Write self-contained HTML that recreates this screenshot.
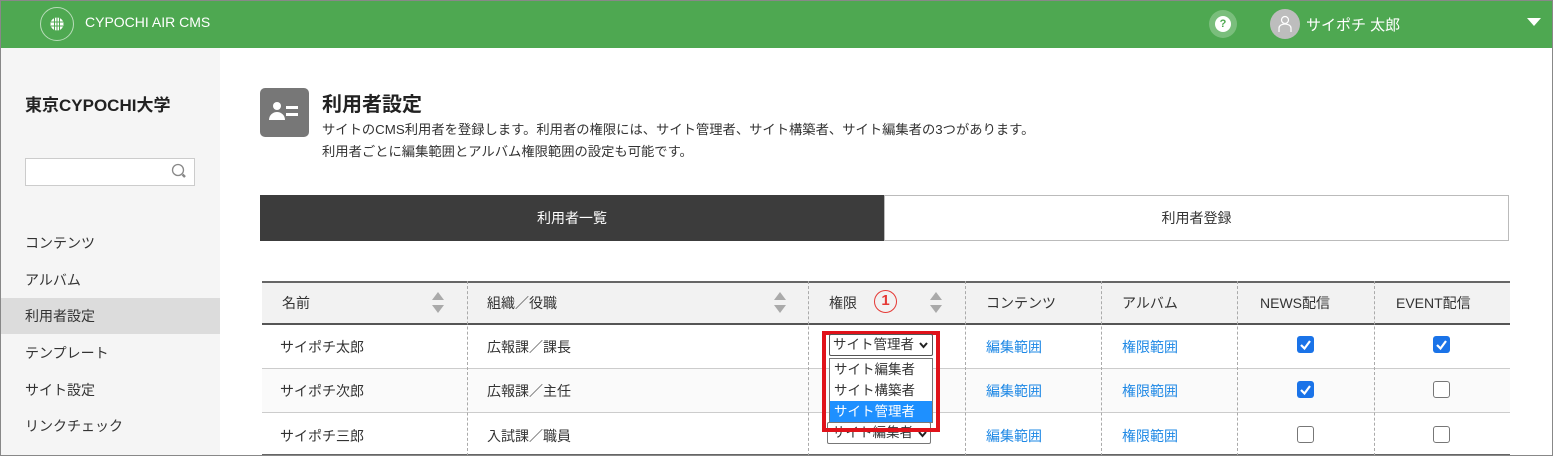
<!DOCTYPE html>
<html><head><meta charset="utf-8"><style>
*{margin:0;padding:0;box-sizing:border-box}
body{width:1553px;height:456px;overflow:hidden;font-family:"Liberation Sans","Noto Sans CJK JP",sans-serif;color:#333;background:#fff;position:relative;font-size:14px}
.a{position:absolute}
#frame{left:0;top:0;width:1553px;height:456px;border:1px solid #888;z-index:50;pointer-events:none}
#hdr{left:0;top:0;width:1553px;height:48px;background:#4ea851}
#side{left:0;top:48px;width:220px;height:408px;background:#f5f5f5}
.nav{left:0;width:220px;height:36px;line-height:36px;padding-left:25px;font-size:14px;color:#333}
.th,.td{position:absolute;font-size:14px}
.vl{position:absolute;top:281px;height:175px;border-left:1px dashed #aaa}
.hl{position:absolute;left:262px;width:1248px;border-top:1px solid #ccc}
.lnk{color:#1e88e5}
.cb{position:absolute;width:17px;height:17px;border-radius:3px}
.on{background:#1a73e8}
.off{border:1.5px solid #777;background:#fff}
.sort{position:absolute;width:0;height:0;border-left:6px solid transparent;border-right:6px solid transparent}
</style></head><body>
<div class="a" id="hdr"></div>
<div class="a" style="left:40px;top:7px;width:34px;height:34px;border-radius:50%;border:1px solid rgba(255,255,255,.6)"></div>
<svg class="a" style="left:50px;top:17px" width="14" height="14" viewBox="0 0 14 14"><circle cx="7" cy="7" r="6.5" fill="#fff"/><g stroke="#4ea851" stroke-width="1"><line x1="4.5" y1="1" x2="4.5" y2="13"/><line x1="7" y1="0" x2="7" y2="14"/><line x1="9.5" y1="1" x2="9.5" y2="13"/><line x1="1" y1="5" x2="13" y2="5"/><line x1="1" y1="9" x2="13" y2="9"/></g></svg>
<div class="a" style="left:85px;top:14px;color:#fff;font-size:14px">CYPOCHI AIR CMS</div>
<div class="a" style="left:1209px;top:10px;width:28px;height:28px;border-radius:50%;background:rgba(255,255,255,.25)"></div>
<div class="a" style="left:1215px;top:16px;width:16px;height:16px;border-radius:50%;background:#fff;color:#4ea851;font-size:11px;font-weight:bold;text-align:center;line-height:16px">?</div>
<div class="a" style="left:1270px;top:9px;width:30px;height:30px;border-radius:50%;background:#bdbdbd"></div>
<svg class="a" style="left:1277px;top:15px" width="16" height="18" viewBox="0 0 16 18" fill="none" stroke="#fff" stroke-width="1.2"><circle cx="8" cy="5" r="3.5"/><path d="M2 17v-4a6 4 0 0 1 12 0v4"/></svg>
<div class="a" style="left:1306px;top:14px;color:#fff;font-size:15px">サイポチ 太郎</div>
<div class="a" style="left:1527px;top:18px;border-left:7px solid transparent;border-right:7px solid transparent;border-top:8px solid #fff"></div>

<div class="a" id="side"></div>
<div class="a" style="left:25px;top:91px;font-size:17px;font-weight:bold;color:#222">東京CYPOCHI大学</div>
<div class="a" style="left:25px;top:158px;width:170px;height:28px;background:#fff;border:1px solid #ccc"></div>
<svg class="a" style="left:171px;top:163px" width="18" height="18" viewBox="0 0 18 18" fill="none" stroke="#888" stroke-width="1.3"><circle cx="7" cy="7" r="5.5"/><line x1="11.5" y1="11.5" x2="14" y2="14" stroke-width="2.5"/></svg>
<div class="a nav" style="top:225px">コンテンツ</div>
<div class="a nav" style="top:262px">アルバム</div>
<div class="a nav" style="top:298px;background:#dcdcdc">利用者設定</div>
<div class="a nav" style="top:335px">テンプレート</div>
<div class="a nav" style="top:372px">サイト設定</div>
<div class="a nav" style="top:408px">リンクチェック</div>

<div class="a" style="left:260px;top:88px;width:49px;height:49px;border-radius:5px;background:#777"></div>
<svg class="a" style="left:267px;top:100px" width="36" height="24" viewBox="0 0 36 24" fill="#fff"><circle cx="10" cy="6" r="4"/><path d="M2 20c0-5 4-8 8-8s8 3 8 8z"/><rect x="19" y="6" width="12" height="3"/><rect x="19" y="13" width="12" height="3"/></svg>
<div class="a" style="left:322px;top:88px;font-size:20px;font-weight:bold;color:#222">利用者設定</div>
<div class="a" style="left:322px;top:119px;font-size:13.3px;line-height:22px;color:#333">サイトのCMS利用者を登録します。利用者の権限には、サイト管理者、サイト構築者、サイト編集者の3つがあります。<br>利用者ごとに編集範囲とアルバム権限範囲の設定も可能です。</div>

<div class="a" style="left:260px;top:195px;width:624px;height:46px;background:#3c3c3c;color:#fff;text-align:center;line-height:46px;font-size:14px">利用者一覧</div>
<div class="a" style="left:884px;top:195px;width:625px;height:46px;border:1px solid #bbb;text-align:center;line-height:44px;font-size:14px">利用者登録</div>

<div class="a" style="left:262px;top:281px;width:1248px;height:44px;background:#f2f2f2;border-top:2px solid #666;border-bottom:2px solid #555"></div>
<div class="a" style="left:262px;top:369px;width:1248px;height:43px;background:#fafafa"></div>
<div class="hl" style="top:368px"></div>
<div class="hl" style="top:412px"></div>
<div class="a" style="left:262px;top:454px;width:1248px;border-top:2px solid #666"></div>
<div class="vl" style="left:467px"></div><div class="vl" style="left:808px"></div><div class="vl" style="left:965px"></div><div class="vl" style="left:1101px"></div><div class="vl" style="left:1237px"></div><div class="vl" style="left:1374px"></div>

<div class="th" style="left:282px;top:293px">名前</div>
<div class="sort" style="left:432px;top:292px;border-bottom:8px solid #aaa"></div><div class="sort" style="left:432px;top:305px;border-top:8px solid #aaa"></div>
<div class="th" style="left:487px;top:293px">組織／役職</div>
<div class="sort" style="left:774px;top:292px;border-bottom:8px solid #aaa"></div><div class="sort" style="left:774px;top:305px;border-top:8px solid #aaa"></div>
<div class="th" style="left:829px;top:293px">権限</div>
<div class="a" style="left:874px;top:290px;width:23px;height:23px;border:1.5px solid #e53935;border-radius:50%;color:#e53935;font-size:15px;font-weight:bold;text-align:center;line-height:20px">1</div>
<div class="sort" style="left:930px;top:292px;border-bottom:8px solid #aaa"></div><div class="sort" style="left:930px;top:305px;border-top:8px solid #aaa"></div>
<div class="th" style="left:986px;top:293px">コンテンツ</div>
<div class="th" style="left:1122px;top:293px">アルバム</div>
<div class="th" style="left:1260px;top:293px">NEWS配信</div>
<div class="th" style="left:1396px;top:293px">EVENT配信</div>

<div class="td" style="left:280px;top:337px">サイポチ太郎</div>
<div class="td" style="left:487px;top:337px">広報課／課長</div>
<div class="td" style="left:280px;top:381px">サイポチ次郎</div>
<div class="td" style="left:487px;top:381px">広報課／主任</div>
<div class="td" style="left:280px;top:426px">サイポチ三郎</div>
<div class="td" style="left:487px;top:426px">入試課／職員</div>
<div class="td lnk" style="left:986px;top:337px">編集範囲</div><div class="td lnk" style="left:1122px;top:337px">権限範囲</div>
<div class="td lnk" style="left:986px;top:381px">編集範囲</div><div class="td lnk" style="left:1122px;top:381px">権限範囲</div>
<div class="td lnk" style="left:986px;top:426px">編集範囲</div><div class="td lnk" style="left:1122px;top:426px">権限範囲</div>

<div class="cb on" style="left:1297px;top:336px"></div><div class="cb on" style="left:1433px;top:336px"></div>
<div class="cb on" style="left:1297px;top:381px"></div><div class="cb off" style="left:1433px;top:381px"></div>
<div class="cb off" style="left:1297px;top:426px"></div><div class="cb off" style="left:1433px;top:426px"></div>
<svg class="a" style="left:1297px;top:336px;z-index:5" width="153" height="62" viewBox="0 0 153 62" fill="none" stroke="#fff" stroke-width="2.2"><path d="M4 9l3.5 3.5L13 5"/><path d="M140 9l3.5 3.5L149 5"/><path d="M4 54l3.5 3.5L13 50"/></svg>

<div class="a" style="left:827px;top:422px;width:104px;height:22px;border:1px solid #777;border-radius:2px;font-size:13.5px;padding-left:4px;line-height:20px;background:#fff;overflow:hidden">サイト編集者</div>
<svg class="a" style="left:918px;top:431px" width="9" height="7" viewBox="0 0 9 7" fill="none" stroke="#222" stroke-width="2"><path d="M1 1l3.5 4L8 1"/></svg>
<div class="a" style="left:822px;top:331px;width:118px;height:101px;border:4px solid #e0121a;z-index:10"></div>
<div class="a" style="left:829px;top:334px;width:104px;height:22px;border:1px solid #555;border-radius:2px;font-size:13.5px;padding-left:3px;line-height:20px;background:#fff;z-index:11">サイト管理者</div>
<svg class="a" style="left:919px;top:342px;z-index:12" width="9" height="7" viewBox="0 0 9 7" fill="none" stroke="#222" stroke-width="2"><path d="M1 1l3.5 4L8 1"/></svg>
<div class="a" style="left:829px;top:358px;width:104px;height:65px;border:1px solid #777;background:#fff;font-size:13.5px;line-height:21px;z-index:11">
<div style="padding-left:4px">サイト編集者</div><div style="padding-left:4px">サイト構築者</div><div style="padding-left:4px;background:#1e90ff;color:#fff">サイト管理者</div></div>
<div class="a" id="frame"></div>
</body></html>
